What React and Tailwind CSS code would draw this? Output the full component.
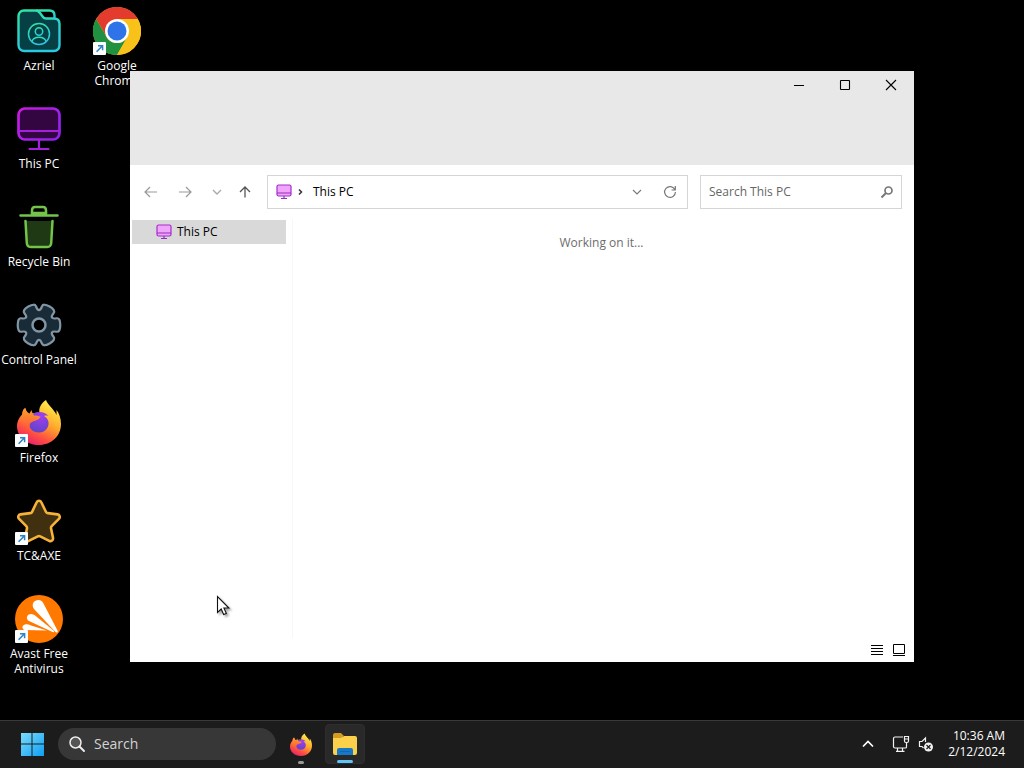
import React, { useId } from "react";

function ShortcutArrow() {
  return (
    <svg viewBox="0 0 13 13" className="absolute bottom-0 left-0 size-[13px]" aria-hidden="true">
      <rect width="13" height="13" rx="1" fill="#fbfdff" />
      <path d="M3.6 9.8 9 4.2M5 3.7h4.6v4.6" fill="none" stroke="#2f82c4" strokeWidth="1.5" />
    </svg>
  );
}

function UserFolderIcon() {
  const id = useId();
  return (
    <svg viewBox="0 0 48 48" className="size-12" aria-hidden="true">
      <defs>
        <linearGradient id={id} x1="0" y1="0" x2="0.3" y2="1">
          <stop offset="0" stopColor="#2fe3a6" />
          <stop offset="1" stopColor="#2cc8e0" />
        </linearGradient>
      </defs>
      <g fill="none" stroke={`url(#${id})`} strokeWidth="2.4" strokeLinejoin="round" strokeLinecap="round">
        <path d="M9 3.500H21c2 0 3 1.200 4 2.500l3 4c.8 1.200 1.800 1.500 3 1.500h8c3.500 0 5.500 2 5.500 5.500v21c0 4-2.500 6-6 6H9.500c-3.500 0-6-2.500-6-6V9.500c0-3.500 2-6 5.500-6Z" fill="#063f44" />
        <path d="M22 3.500h12.500c3.500 0 5 2 5 5v3" />
        <circle cx="24" cy="27" r="10.500" strokeWidth="1.500" />
        <circle cx="24" cy="24.500" r="3.700" strokeWidth="1.500" />
        <path d="M17 34.500c1-3.500 4-4.200 7-4.200s6 .7 7 4.200" strokeWidth="1.500" />
      </g>
    </svg>
  );
}

function MonitorIcon() {
  const id = useId();
  return (
    <svg viewBox="0 0 48 48" className="size-12" aria-hidden="true">
      <defs>
        <linearGradient id={id} x1="0" y1="0" x2="1" y2="0.6">
          <stop offset="0" stopColor="#c91bdd" />
          <stop offset="1" stopColor="#9422ef" />
        </linearGradient>
      </defs>
      <rect x="3.500" y="3.500" width="41" height="31" rx="6.500" fill="#330642" stroke={`url(#${id})`} strokeWidth="2.700" />
      <path d="M4 26h40M24 35v9M14.500 44h19" fill="none" stroke="#a51fdf" strokeWidth="2.200" strokeLinecap="round" />
    </svg>
  );
}

function BinIcon() {
  return (
    <svg viewBox="0 0 48 48" className="size-12" aria-hidden="true">
      <path d="m10.500 18 1.300 22c.2 2.500 1.500 4 4 4h16.400c2.500 0 3.800-1.500 4-4l1.300-22Z" fill="#1e3913" />
      <g fill="none" stroke="#72c54a" strokeWidth="2.500" strokeLinecap="round" strokeLinejoin="round">
        <path d="m10.500 18 1.300 22c.2 2.500 1.500 4 4 4h16.400c2.500 0 3.800-1.500 4-4l1.300-22" />
        <path d="M17 11V7.500c0-2 1-3.500 3-3.500h8c2 0 3 1.500 3 3.500V11" />
        <path d="M17 10h14M5.500 12.500h37" />
      </g>
    </svg>
  );
}

// Six teeth, with the corners rounded by curving through the midpoints.
function gearPath() {
  const points = [];
  for (let tooth = 0; tooth < 6; tooth += 1) {
    for (const [radius, offset] of [[15, -24], [22.5, -19], [22.5, 19], [15, 24]]) {
      const angle = ((tooth * 60 + offset) * Math.PI) / 180;
      points.push([24 + radius * Math.cos(angle), 24 + radius * Math.sin(angle)]);
    }
  }
  const middle = (a, b) => `${(a[0] + b[0]) / 2} ${(a[1] + b[1]) / 2}`;
  const start = middle(points[points.length - 1], points[0]);
  const curves = points.map((p, i) => `Q${p[0]} ${p[1]} ${middle(p, points[(i + 1) % points.length])}`);
  return `M${start}${curves.join("")}Z`;
}

function GearIcon() {
  return (
    <svg viewBox="0 0 48 48" className="size-12" aria-hidden="true">
      <path d={gearPath()} fill="#192b36" stroke="#8196a5" strokeWidth="2.200" />
      <circle cx="24" cy="24" r="6.500" fill="#000" stroke="#8196a5" strokeWidth="2.500" />
    </svg>
  );
}

function StarIcon() {
  return (
    <svg viewBox="0 0 48 48" className="size-12" aria-hidden="true">
      <path
        d="M21.700 5.300c.9-2 3.700-2 4.600 0l4.600 9.500c.4.800 1 1.200 1.900 1.300l9.700 1.300c2.200.3 3 2.800 1.400 4.400l-7.200 7.300c-.6.600-.8 1.300-.7 2.200l2 9.500c.4 2.300-1.700 4.100-3.800 3l-9-4.400c-.8-.4-1.600-.4-2.400 0l-9 4.400c-2.100 1.100-4.200-.7-3.800-3l2-9.500c.1-.9-.1-1.600-.7-2.200l-7.200-7.300c-1.600-1.600-.8-4.100 1.400-4.400l9.700-1.300c.9-.1 1.500-.5 1.900-1.300Z"
        fill="#41300f" stroke="#f7b239" strokeWidth="2.600" strokeLinejoin="round"
      />
    </svg>
  );
}

function ChromeIcon() {
  return (
    <svg viewBox="0 0 48 48" className="size-12" aria-hidden="true">
      <circle cx="24" cy="24" r="24" fill="#f9c21b" />
      <path d="M24 12h20.800A24 24 0 0 0 3.200 12l10.400 18Z" fill="#e33b2e" />
      <path d="M3.200 12A24 24 0 0 0 24 48l10.400-18A12 12 0 0 1 13.600 30Z" fill="#1f9140" />
      <path d="M34.400 30 24 48a24 24 0 0 0 20.800-36H24Z" fill="#f9c21b" />
      <circle cx="24" cy="24" r="12" fill="#fff" />
      <circle cx="24" cy="24" r="9.500" fill="#2e74e8" />
    </svg>
  );
}

function FirefoxIcon({ className }) {
  const id = useId();
  return (
    <svg viewBox="0 0 48 48" className={className} aria-hidden="true">
      <defs>
        <linearGradient id={`${id}a`} x1="0.8" y1="0.05" x2="0.3" y2="1">
          <stop offset="0" stopColor="#fff04a" />
          <stop offset="0.45" stopColor="#ffa62c" />
          <stop offset="0.75" stopColor="#ff5040" />
          <stop offset="1" stopColor="#e8206e" />
        </linearGradient>
        <radialGradient id={`${id}b`} cx="0.6" cy="0.2" r="0.8">
          <stop offset="0" stopColor="#a23df0" />
          <stop offset="1" stopColor="#6244c8" />
        </radialGradient>
        <linearGradient id={`${id}c`} x1="0.3" y1="0" x2="0.2" y2="1">
          <stop offset="0" stopColor="#ffa028" />
          <stop offset="1" stopColor="#ff5a3a" />
        </linearGradient>
      </defs>
      <path d="M31 1c-5 3.500-7.500 8-6.500 13-3.500-.8-7.500 0-10 1.500C11.500 13.500 11 11 10.500 9 8 10.500 7.500 13 7.200 15.500 4.500 18 2 22.500 2 27c0 11 9.500 19 22 19s22-9 22-21c0-6-2-11-4.500-14 0 2 .2 3.500 0 5C39 10 33 6.500 31 1Z" fill={`url(#${id}a)`} />
      <path d="M17 15.500c3-3 12-4 16.500 1.500-2-.6-3.400-.5-4.500 0 5 3 5.500 8 3.500 11.500-2 3.700-5.500 5-9 5-5.500 0-9.500-4-9.500-9Z" fill={`url(#${id}b)`} />
      <path d="M7.200 15.500c.2-2.500.6-4.700 2.300-6.500.8 2.500 2.500 4.300 5 5.500l2-3.500c.5 2.500 1.500 4 2.500 5.500 2 0 4.500.5 6.500 1-1 3-4.500 4-7.500 5-3 1-4 3-3 6.500-6 0-9.500-7-7.800-13.500Z" fill={`url(#${id}c)`} />
    </svg>
  );
}

function AvastIcon() {
  return (
    <svg viewBox="0 0 48 48" className="size-12" aria-hidden="true">
      <circle cx="24" cy="24" r="24" fill="#ff7800" />
      <path d="M19 14C15.500 8.500 20 4.500 24 5c2.600.4 4 2.200 5 4.500L42.500 35.500c.7 2-.4 2.800-2 1.400Z" fill="#fff" />
      <path d="M13 25.500c-2.500-3-.5-6.500 3-6.500 2 0 3.500 1 5 2.200L38.500 35.500c1.200 1 .6 2-1 1.500Z" fill="#fff" />
      <path d="M9.500 35c-2.800-1.200-2.800-4.800.5-5.600 1.800-.4 4 .2 6 1L32 35.500Z" fill="#fff" />
    </svg>
  );
}

function SmallMonitor() {
  return (
    <svg viewBox="0 0 16 16" className="size-4 shrink-0" aria-hidden="true">
      <rect x="1" y="1" width="14" height="11" rx="1.500" fill="#f0a5fa" stroke="#a52fd0" strokeWidth="1.200" />
      <path d="M1 9h14M8 12v2.500M5 14.500h6" fill="none" stroke="#8d2fbb" strokeWidth="1.200" />
    </svg>
  );
}

function Glyph({ d, className, width = 1.2 }) {
  return (
    <svg viewBox="0 0 16 16" className={className} fill="none" stroke="currentColor" strokeWidth={width} aria-hidden="true">
      <path d={d} />
    </svg>
  );
}

const shortcuts = [
  { label: "Azriel", icon: <UserFolderIcon /> },
  { label: "This PC", icon: <MonitorIcon /> },
  { label: "Recycle Bin", icon: <BinIcon /> },
  { label: "Control Panel", icon: <GearIcon /> },
  { label: "Firefox", icon: <FirefoxIcon className="size-12" />, linked: true },
  { label: "TC&AXE", icon: <StarIcon />, linked: true },
  { label: "Avast Free Antivirus", icon: <AvastIcon />, linked: true },
  { label: "Google Chrome", icon: <ChromeIcon />, linked: true },
];

function DesktopIcons() {
  return (
    <nav aria-label="Desktop" className="grid w-fit grid-flow-col grid-rows-[repeat(7,98px)] auto-cols-[78px]">
      {shortcuts.map((item) => (
        <button key={item.label} type="button" className="flex flex-col items-center gap-[3px] pt-[7px] text-xs leading-[15px] text-white">
          <span className="relative">
            {item.icon}
            {item.linked && <ShortcutArrow />}
          </span>
          <span className="text-center">{item.label}</span>
        </button>
      ))}
    </nav>
  );
}

function ExplorerWindow() {
  return (
    <section aria-label="This PC" className="absolute top-[71px] right-[110px] bottom-[58px] left-[130px] flex flex-col bg-white text-xs text-black">
      <header className="flex h-[94px] shrink-0 items-start justify-end bg-[#e8e8e8]">
        <button type="button" aria-label="Minimize" className="flex h-7 w-[46px] items-center justify-center">
          <Glyph d="M3 8.500h10" width={1} className="size-4" />
        </button>
        <button type="button" aria-label="Maximize" className="flex h-7 w-[46px] items-center justify-center">
          <Glyph d="M4 3.500h8q.5 0 .5.500v8q0 .5-.5.500h-8q-.5 0-.5-.5v-8q0-.5.500-.5Z" width={1.1} className="size-4" />
        </button>
        <button type="button" aria-label="Close" className="flex h-7 w-[46px] items-center justify-center">
          <Glyph d="m3 3 10 10M13 3 3 13" width={1.1} className="size-4" />
        </button>
      </header>

      <div className="flex items-center py-2.5 pr-3 pl-[3px]">
        <button type="button" aria-label="Back" className="flex w-9 justify-center text-[#999]">
          <Glyph d="M14 8H2M7 3 2 8l5 5" className="size-4" />
        </button>
        <button type="button" aria-label="Forward" className="flex w-8 justify-center text-[#999]">
          <Glyph d="M2 8h12M9 3l5 5-5 5" className="size-4" />
        </button>
        <button type="button" aria-label="Recent locations" className="flex w-8 justify-center text-[#aaa]">
          <Glyph d="m4 6 4 4 4-4" width={1.400} className="size-4" />
        </button>
        <button type="button" aria-label="Up" className="flex w-6 justify-center text-[#555]">
          <Glyph d="M8 13.500V3M3 8l5-5 5 5" width={1.300} className="size-4" />
        </button>
        <div className="ml-2.5 flex h-[34px] min-w-0 flex-1 items-center border border-[#d5d5d5] pr-[9px] pl-2">
          <SmallMonitor />
          <Glyph d="m7 5.500 2.500 2.500L7 10.500" width={1.500} className="size-4 text-[#333]" />
          <button type="button" className="ml-1 px-px">This PC</button>
          <button type="button" aria-label="Previous locations" className="ml-auto text-[#777]">
            <Glyph d="M4 6l4 4 4-4" width={1.100} className="size-4" />
          </button>
          <button type="button" aria-label="Refresh" className="ml-[17px] text-[#777]">
            <Glyph d="M12.800 5.500A5.400 5.400 0 1 0 13.400 8M13.300 2v4H9.500" width={1.200} className="size-4" />
          </button>
        </div>
        <label className="ml-3 flex h-[34px] w-[202px] shrink-0 items-center border border-[#d5d5d5] pr-1.5 pl-2">
          <input type="text" aria-label="Search This PC" placeholder="Search This PC" className="min-w-0 flex-1 bg-transparent outline-none placeholder:text-[#666]" />
          <svg viewBox="0 0 16 16" className="size-4" fill="none" stroke="#777" aria-hidden="true">
            <circle cx="9.500" cy="6.500" r="3.500" strokeWidth="1.700" />
            <path d="m7 9-4.500 4.500" strokeWidth="2" />
          </svg>
        </label>
      </div>

      <div className="flex min-h-0 flex-1">
        <nav aria-label="Folders" className="w-[163px] shrink-0 border-r border-[#f7f7f7] pt-px pr-1.5 pl-0.5">
          <a href="#this-pc" className="flex h-6 items-center gap-[5px] bg-[#d9d9d9] pl-6">
            <SmallMonitor />
            This PC
          </a>
        </nav>
        <main className="flex-1 pt-4 pr-1 text-center leading-4 text-[#6d6d6d]">Working on it...</main>
      </div>

      <footer className="flex h-6 shrink-0 items-center justify-end gap-1.5 pr-[7px]">
        <button type="button" aria-label="Details view">
          <Glyph d="M2 3.500h12M2 6.500h12M2 9.500h12M2 12.500h12" width={1} className="size-4" />
        </button>
        <button type="button" aria-label="Large icons view">
          <Glyph d="M2.500 2.500h11v9h-11ZM2 13.500h12" width={1} className="size-4" />
        </button>
      </footer>
    </section>
  );
}

function Taskbar() {
  const id = useId();
  return (
    <footer className="flex h-12 shrink-0 items-center border-t border-[#393939] bg-[#1c1c1c] pb-px text-white">
      <button type="button" aria-label="Start" className="ml-5">
        <svg viewBox="0 0 24 24" className="size-6" aria-hidden="true">
          <defs>
            <linearGradient id={id} gradientUnits="userSpaceOnUse" x1="1" y1="1" x2="23" y2="23">
              <stop offset="0" stopColor="#7bdcfc" />
              <stop offset="1" stopColor="#12a1f3" />
            </linearGradient>
          </defs>
          <path d="M1 1h10.500v10.500H1ZM12.500 1H24v10.500H12.500ZM1 12.500h10.500V24H1ZM12.500 12.500H24V24H12.500Z" fill={`url(#${id})`} />
        </svg>
      </button>
      <label className="ml-3.5 flex h-8 w-[218px] items-center gap-2 rounded-full bg-[#373737] pl-2.5">
        <svg viewBox="0 0 18 18" className="size-[18px] shrink-0" fill="#555" stroke="#eee" aria-hidden="true">
          <circle cx="7.500" cy="7.500" r="5.500" strokeWidth="1.500" />
          <path d="m11.500 11.500 4.500 4.500" strokeWidth="1.900" strokeLinecap="round" />
        </svg>
        <input type="text" aria-label="Search" placeholder="Search" className="min-w-0 flex-1 bg-transparent text-sm outline-none placeholder:text-[#d3d3d3]" />
      </label>
      <button type="button" aria-label="Firefox" className="ml-[5px] flex h-10 w-10 flex-col items-center justify-end gap-1">
        <FirefoxIcon className="size-6" />
        <span className="h-[3px] w-1.5 rounded-full bg-[#999]" />
      </button>
      <button type="button" aria-label="File Explorer" className="ml-1 flex h-10 w-10 flex-col items-center justify-end gap-1 rounded border border-[#2e2e2e] bg-[#292929]">
        <svg viewBox="0 0 26 24" className="h-6 w-[26px]" aria-hidden="true">
          <path d="M1 3q0-2 2-2h6l3 3h-1v5H1Z" fill="#d59b20" />
          <path d="M1 6h8l3-2h11q2 0 2 2v15q0 2-2 2H3q-2 0-2-2Z" fill="#fbd04b" />
          <path d="M5 23v-5q0-2 2-2h12q2 0 2 2v5Z" fill="#1878c8" />
          <path d="M8 19h10v1H8Z" fill="#0b66b4" />
        </svg>
        <span className="h-[3px] w-4 rounded-full bg-[#62c4f5]" />
      </button>
      <div className="ml-auto flex items-center">
        <button type="button" aria-label="Show hidden icons">
          <Glyph d="m3 10.500 5-5 5 5" width={1.700} className="size-4" />
        </button>
        <button type="button" aria-label="Network" className="ml-4">
          <svg viewBox="0 0 18 18" className="size-[18px]" fill="none" stroke="#f2f2f2" strokeWidth="1.200" aria-hidden="true">
            <path d="M11 2H3q-1.500 0-1.500 1.500v8Q1.500 13 3 13h10.500q1 0 1-1V7.500M5.500 13v3M10.500 13v3M4 16.300h8.500" />
            <path d="M12.500 1.500h4V6q0 1.500-1.500 1.500h-1q-1.500 0-1.500-1.500ZM12.500 4h4" />
          </svg>
        </button>
        <button type="button" aria-label="Volume" className="ml-2">
          <svg viewBox="0 0 16 18" className="h-[18px] w-4" fill="none" stroke="#f2f2f2" strokeWidth="1.200" aria-hidden="true">
            <path d="M7.500 7V3L4 6.500H1.500v5H4l1.500 1.500" />
            <circle cx="10.500" cy="12" r="4.500" fill="#f2f2f2" stroke="none" />
            <path d="m8.500 10 4 4M12.500 10l-4 4" stroke="#1c1c1c" />
          </svg>
        </button>
        <time dateTime="2024-02-12T10:36" className="mr-[19px] ml-3.5 text-right text-xs leading-4">
          <span className="block">10:36 AM</span>
          <span className="block">2/12/2024</span>
        </time>
      </div>
    </footer>
  );
}

export default function App() {
  return (
    <div className="flex h-screen flex-col overflow-hidden bg-black font-['Open_Sans',sans-serif]">
      <div className="relative min-h-0 flex-1">
        <DesktopIcons />
        <ExplorerWindow />
        <svg viewBox="0 0 16 22" className="absolute top-[595px] left-[216px] h-[22px] w-4 drop-shadow-[2px_2px_1px_rgba(0,0,0,0.35)]" aria-hidden="true">
          <path d="M1.500 1.500v16l3.700-3.500 2.400 5.500 2.700-1.100-2.400-5.400h5Z" fill="#fff" stroke="#111" strokeWidth="1.100" />
        </svg>
      </div>
      <Taskbar />
    </div>
  );
}
